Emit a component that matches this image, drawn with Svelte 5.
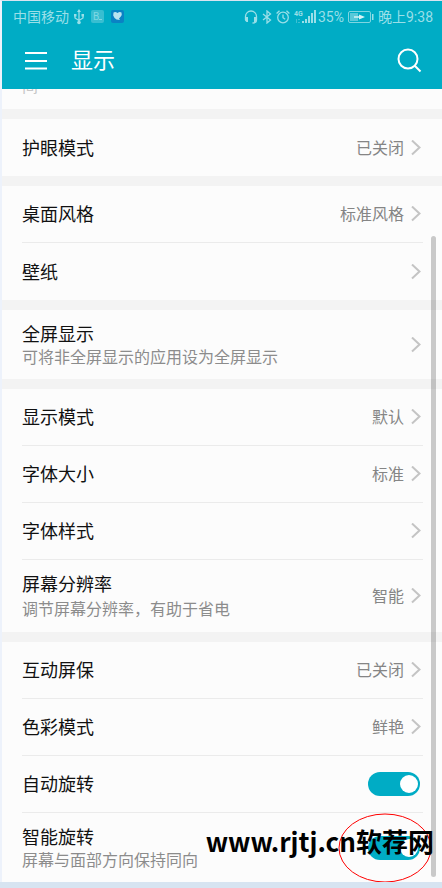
<script>
  let autoRotate = $state(true);
  let smartRotate = $state(true);

  const groups = [
    [{ title: "护眼模式", value: "已关闭" }],
    [{ title: "桌面风格", value: "标准风格" }, { title: "壁纸" }],
    [{ title: "全屏显示", note: "可将非全屏显示的应用设为全屏显示" }],
    [
      { title: "显示模式", value: "默认" },
      { title: "字体大小", value: "标准" },
      { title: "字体样式" },
      { title: "屏幕分辨率", note: "调节屏幕分辨率，有助于省电", value: "智能", tall: true },
    ],
  ];
  const last = [
    { title: "互动屏保", value: "已关闭" },
    { title: "色彩模式", value: "鲜艳" },
  ];
</script>

{#snippet navRow(item)}
  <button class="row" class:double={item.note} class:tall={item.tall}>
    <span class="texts">
      <span class="title">{item.title}</span>
      {#if item.note}<span class="note">{item.note}</span>{/if}
    </span>
    {#if item.value}<span class="value">{item.value}</span>{/if}
    <svg class="chevron" width="11" height="16" viewBox="0 0 11 16">
      <path d="M2 .5l7.500 7L2 14.500" />
    </svg>
  </button>
{/snippet}

<div class="phone">
  <header>
    <div class="status">
      <span class="carrier">中国移动</span>
      <svg class="line" width="10" height="16" viewBox="0 0 10 16">
        <path d="M5 2v11M1 6v3l4 2.500 4-2.500V6" />
        <path class="solid" d="M5 0l2 3H3zM0 5h2.500v2.500H0zM7.500 5H10v2.500H7.500z" />
        <circle class="solid" cx="5" cy="13.500" r="1.800" />
      </svg>
      <svg class="app" width="13" height="13" viewBox="0 0 13 13">
        <rect width="13" height="13" rx="2" fill="#fff" fill-opacity=".22" />
        <text x="2" y="10" font-size="10" fill="#7fd8e3">B</text>
        <path d="M8 9.500h3" stroke="#7fd8e3" />
      </svg>
      <svg class="app" width="13" height="13" viewBox="0 0 13 13">
        <rect width="13" height="13" rx="2" fill="#0a82c4" />
        <path d="M2.500 2.500q2-1 4 .5 2-1.500 4-.5.8 2.500-.7 4L8 8.500l1 1.500-3.500-.5Q3 8 2.200 5.500z" fill="#b9e3f0" />
      </svg>
      <div class="right">
        <svg class="line" width="14" height="14" viewBox="0 0 14 14">
          <path d="M1.500 10V6.500a5.500 5.500 0 0 1 11 0V10q0 3-4 3" />
          <path class="solid" d="M1 7h3v5H2.500L1 10.500zM10 7h3v3.500L11.500 12H10z" />
        </svg>
        <svg class="line" width="10" height="14" viewBox="0 0 10 14">
          <path d="M1 4l7.500 6L5 13V1l3.500 3L1 10" />
        </svg>
        <svg class="line" width="14" height="14" viewBox="0 0 14 14">
          <circle cx="7" cy="7.500" r="5.300" />
          <path d="M7 4.500v3.200l2.200 1.500M.6 3.500L3.500 .8M13.400 3.500L10.500 .8" />
        </svg>
        <svg class="signal" width="23" height="14" viewBox="0 0 23 14">
          <text x="0" y="5.500" font-size="7" font-weight="700">4G</text>
          <path d="M8 11h2v2H8zM11 9h2v4h-2zM14 6h2v7h-2zM17 3h2v10h-2zM20 0h2v13h-2z" />
          <path d="M2 9h1v4H2zM4 9h2v1H4zM4 12h2v1H4z" opacity=".4" />
        </svg>
        <span>35%</span>
        <svg class="battery" width="26" height="12" viewBox="0 0 26 12">
          <rect x=".5" y=".5" width="22" height="11" rx="1.500" fill="none" stroke="#7fd5e1" />
          <path d="M2 2h8v8H2z" fill="#fff" fill-opacity=".35" />
          <path d="M6 5.300h5V3.500l6 2.500-6 2.500V6.700H6z" fill="#d5f3f6" />
          <path d="M24 3h1.500v6H24z" fill="#9adfe8" />
        </svg>
        <span class="time">晚上9:38</span>
      </div>
    </div>
    <div class="bar">
      <button class="icon" aria-label="菜单">
        <svg width="24" height="20" viewBox="0 0 24 20">
          <path d="M1 2h22M1 10h22M1 17.500h22" />
        </svg>
      </button>
      <h1>显示</h1>
      <button class="icon" aria-label="搜索">
        <svg width="25" height="25" viewBox="0 0 25 25">
          <circle cx="11" cy="11" r="9.500" />
          <path d="M17.500 17.500l6 6" />
        </svg>
      </button>
    </div>
  </header>

  <main>
    <section class="cut"><span class="note">间</span></section>

    {#each groups as group}
      <section>
        {#each group as item}
          {@render navRow(item)}
        {/each}
      </section>
    {/each}

    <section>
      {#each last as item}
        {@render navRow(item)}
      {/each}
      <label class="row">
        <span class="texts"><span class="title">自动旋转</span></span>
        <input type="checkbox" bind:checked={autoRotate} />
      </label>
      <label class="row double">
        <span class="texts">
          <span class="title">智能旋转</span>
          <span class="note">屏幕与面部方向保持同向</span>
        </span>
        <input type="checkbox" bind:checked={smartRotate} />
      </label>
    </section>
    <div class="scrollbar"></div>
    <svg class="ring" width="94" height="70" viewBox="0 0 94 70">
      <ellipse cx="47" cy="35" rx="46" ry="34" />
    </svg>
    <div class="watermark">www.rjtj.cn软荐网</div>
  </main>
</div>

<style>
:global(body) {
  background: #d7e4f1;
}

.phone {
  border-left: 2px solid #edf2fb;
  border-top: 1px solid #d7e4f1;
  font-family: Roboto, "Noto Sans CJK SC", sans-serif;
}

button {
  border: none;
  background: none;
  padding: 0;
  font-family: inherit;
  text-align: left;
  cursor: pointer;
}

svg {
  display: block;
  flex: none;
}

header {
  background: #00acc5;
  color: #fff;
}

.status {
  display: flex;
  align-items: center;
  height: 31px;
  padding: 0 9px 0 11px;
  font-size: 14px;
  line-height: 20px;
  color: #9adfe8;
}
.status .line {
  fill: none;
  stroke: #9adfe8;
  stroke-width: 1.3;
}
.status .solid {
  fill: #9adfe8;
  stroke: none;
}
.carrier {
  margin-right: 5px;
}
.app {
  margin-left: 7px;
}
.right {
  display: flex;
  align-items: center;
  gap: 4px;
  margin-left: auto;
}
.signal {
  fill: #9adfe8;
  margin-right: -3px;
}
.time {
  font-size: 14px;
}

.bar {
  display: flex;
  align-items: center;
  height: 57px;
  padding: 0 20px 0 22px;
}
.bar h1 {
  flex: 1;
  margin: 0 0 0 23px;
  font-size: 22px;
  line-height: 32px;
  font-weight: 400;
}
.icon svg {
  fill: none;
  stroke: #fff;
  stroke-width: 2;
}

main {
  position: relative;
  display: flex;
  flex-direction: column;
  gap: 10px;
  background: #f3f3f3;
}

section {
  padding: 0 19px 0 20px;
  background: #fcfcfc;
}
.cut {
  display: flex;
  align-items: flex-end;
  height: 20px;
  padding-bottom: 11px;
  box-sizing: border-box;
  overflow: hidden;
}
.cut .note {
  color: #c8c8c8;
}

.row {
  display: flex;
  align-items: center;
  box-sizing: border-box;
  width: 100%;
  min-height: 57px;
  padding-right: 3px;
  border-bottom: 1px solid #ebebeb;
}
.row:last-child {
  border-bottom: none;
}
.double {
  min-height: 69px;
}
.tall {
  min-height: 72px;
}
.tall .texts {
  gap: 2px;
}
.texts {
  display: flex;
  flex-direction: column;
  flex: 1;
  padding-top: 2px;
}
.title {
  font-size: 18px;
  line-height: 24px;
  color: #111;
}
.note {
  font-size: 16px;
  line-height: 22px;
  color: #8c8c8c;
}
.value {
  padding-top: 2px;
  font-size: 16px;
  line-height: 24px;
  color: #858585;
}
.chevron {
  margin: 0 -1px 0 6px;
  fill: none;
  stroke: #c4c4c4;
  stroke-width: 2;
}

input {
  appearance: none;
  display: flex;
  align-items: center;
  flex: none;
  box-sizing: border-box;
  width: 52px;
  height: 24px;
  margin: 0;
  padding: 0 2px;
  border-radius: 12px;
  background: #c4c4c4;
  cursor: pointer;
}
input::before {
  content: "";
  width: 18px;
  height: 18px;
  border-radius: 50%;
  background: #fff;
}
input:checked {
  justify-content: flex-end;
  background: #00acc5;
}

.scrollbar {
  position: absolute;
  top: 147px;
  right: 6px;
  bottom: 5px;
  width: 5px;
  border-radius: 3px;
  background: rgba(0, 0, 0, 0.2);
}
.ring {
  position: absolute;
  right: 10px;
  bottom: -1px;
  fill: none;
  stroke: #f00;
}
.watermark {
  position: absolute;
  right: 8px;
  bottom: 22px;
  font-family: "Noto Sans CJK SC", sans-serif;
  font-size: 26px;
  line-height: 38px;
  font-weight: 700;
  color: #000;
}
</style>
